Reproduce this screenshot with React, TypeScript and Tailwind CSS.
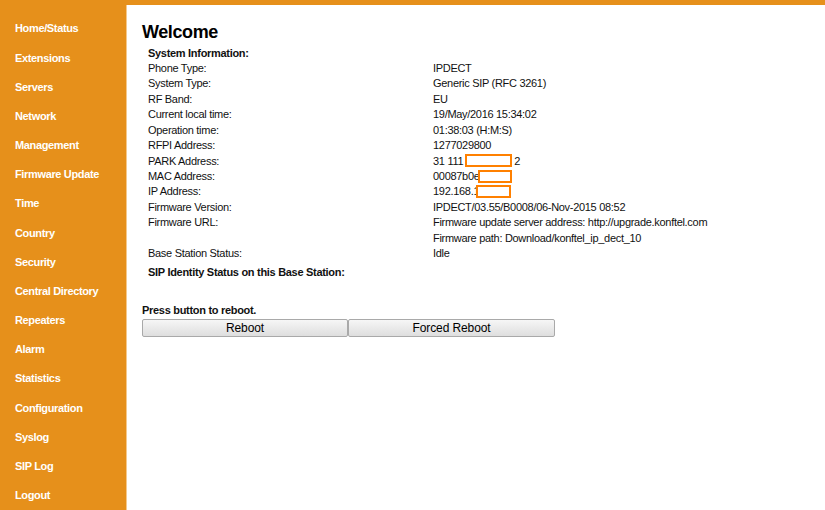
import React from "react";

const menu = [
  "Home/Status",
  "Extensions",
  "Servers",
  "Network",
  "Management",
  "Firmware Update",
  "Time",
  "Country",
  "Security",
  "Central Directory",
  "Repeaters",
  "Alarm",
  "Statistics",
  "Configuration",
  "Syslog",
  "SIP Log",
  "Logout",
];

const Redact = ({ w, ml = "0px" }: { w: string; ml?: string }) => (
  <span className={`inline-block align-middle h-[13px] border-2 border-[#ff8000] bg-white ${w}`} style={{ marginLeft: ml }} />
);

const rows: [string, React.ReactNode][] = [
  ["Phone Type:", "IPDECT"],
  ["System Type:", "Generic SIP (RFC 3261)"],
  ["RF Band:", "EU"],
  ["Current local time:", "19/May/2016 15:34:02"],
  ["Operation time:", "01:38:03 (H:M:S)"],
  ["RFPI Address:", "1277029800"],
  [
    "PARK Address:",
    <span className="inline-flex items-center">
      31 111
      <Redact w="w-[47px]" ml="2px" />
      <span className="ml-[2px]">2</span>
    </span>,
  ],
  [
    "MAC Address:",
    <span className="inline-flex items-center">
      00087b0e
      <Redact w="w-[34px]" ml="-2px" />
    </span>,
  ],
  [
    "IP Address:",
    <span className="inline-flex items-center">
      192.168.1
      <Redact w="w-[35px]" ml="-3px" />
    </span>,
  ],
  ["Firmware Version:", "IPDECT/03.55/B0008/06-Nov-2015 08:52"],
  ["Firmware URL:", "Firmware update server address: http://upgrade.konftel.com"],
  ["", "Firmware path: Download/konftel_ip_dect_10"],
  ["Base Station Status:", "Idle"],
];

export default function App() {
  return (
    <div className="w-[825px] h-[510px] overflow-hidden bg-[#e6901b] flex font-['Liberation_Sans',Arial,sans-serif] text-[11px] tracking-[-0.3px] text-[#111]">
      <nav className="w-[126px] shrink-0 flex flex-col pt-[14px] pl-[15px]">
        {menu.map((m) => (
          <div key={m} className="h-[29.25px] flex items-center text-white font-bold text-[11px] tracking-[-0.35px] whitespace-nowrap">
            {m}
          </div>
        ))}
      </nav>
      <main className="flex-1 mt-[5px] bg-white border-l border-[#f5c98c] pl-[15px] pt-[15px]">
        <h1 className="text-[18px] tracking-[-0.4px] font-bold leading-[24px] text-black">Welcome</h1>
        <div className="pl-[6px] mt-[1px]">
          <div className="h-[15.5px] flex items-center font-bold">System Information:</div>
          {rows.map(([k, v], i) => (
            <div key={i} className="h-[15.45px] flex items-center">
              <div className="w-[285px] shrink-0">{k}</div>
              <div className="whitespace-nowrap">{v}</div>
            </div>
          ))}
          <div className="h-[22px] flex items-center font-bold">SIP Identity Status on this Base Station:</div>
        </div>
        <div className="mt-[19px] font-bold h-[16px] flex items-center">Press button to reboot.</div>
        <div className="flex mt-[1px]">
          <button className="w-[206px] h-[18px] border border-[#a9a9a9] rounded-[2px] bg-gradient-to-b from-[#f6f6f6] to-[#dedede] text-[12px] tracking-[-0.1px] leading-none text-black">
            Reboot
          </button>
          <button className="w-[207px] h-[18px] border border-[#a9a9a9] rounded-[2px] bg-gradient-to-b from-[#f6f6f6] to-[#dedede] text-[12px] tracking-[-0.1px] leading-none text-black">
            Forced Reboot
          </button>
        </div>
      </main>
    </div>
  );
}
